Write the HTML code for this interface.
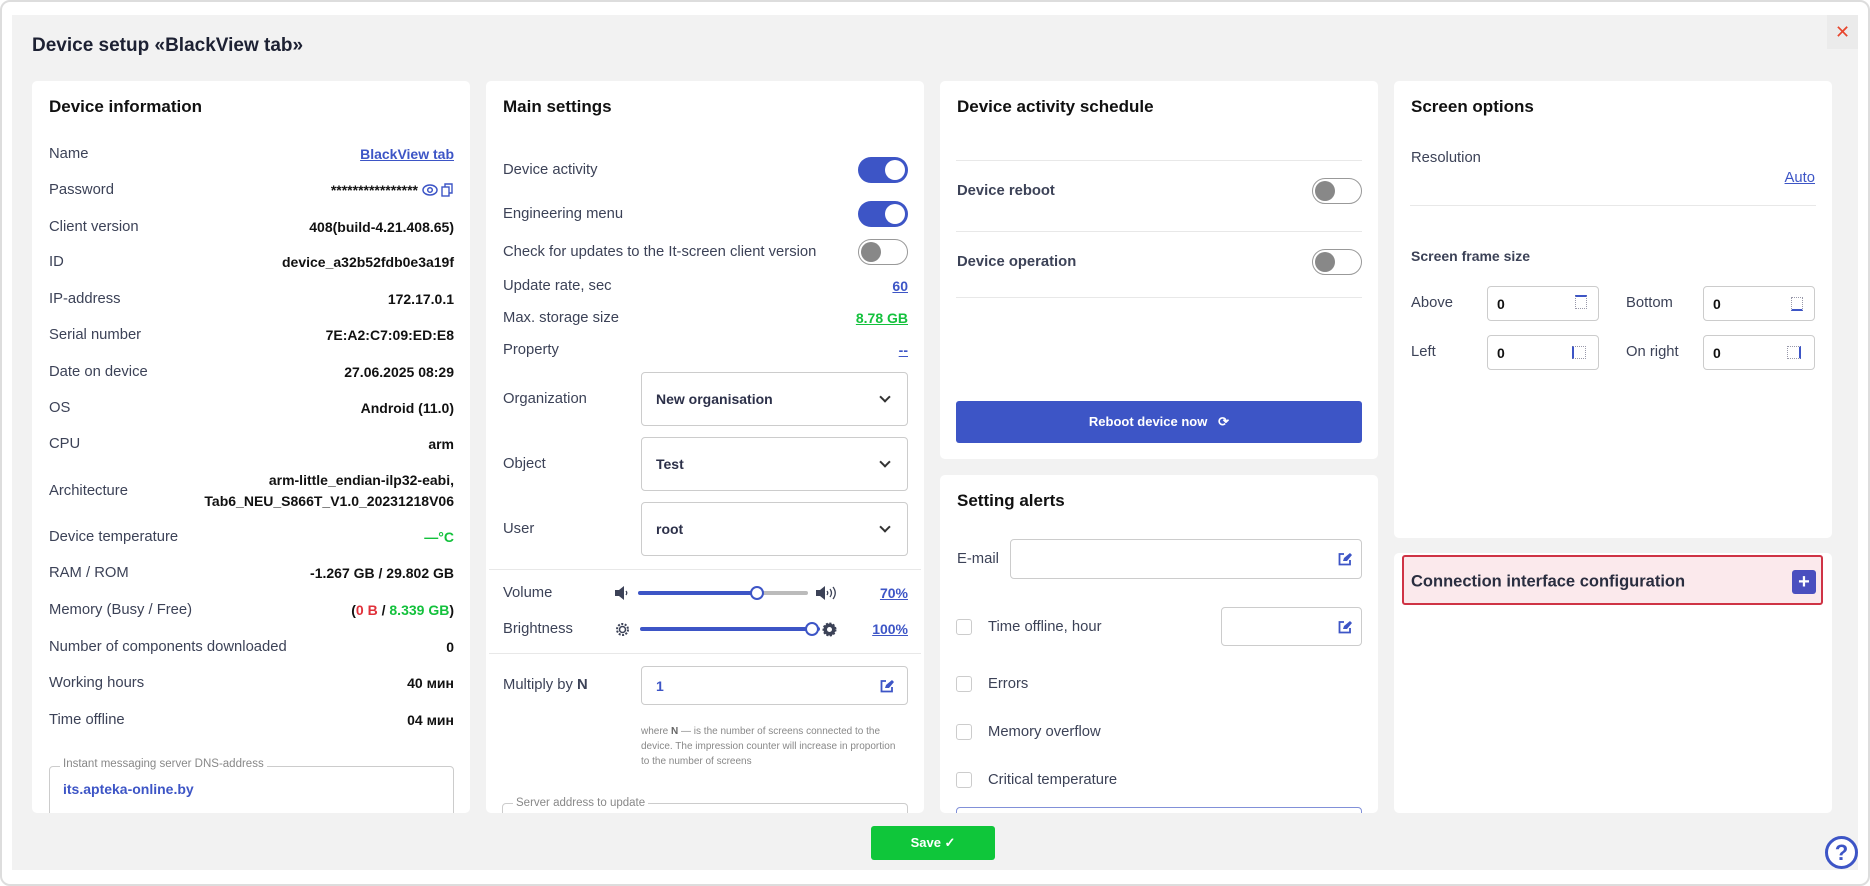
<!DOCTYPE html>
<html><head><meta charset="utf-8"><style>
*{box-sizing:border-box;margin:0;padding:0}
body{width:1870px;height:886px;background:#fff;font-family:"Liberation Sans",sans-serif;color:#3c4257;position:relative;overflow:hidden}
.a{position:absolute}
.outer{left:0;top:0;width:1870px;height:886px;border:2px solid #ddd;border-radius:10px}
.panel{left:12px;top:15px;width:1846px;height:855px;background:#f2f2f2}
.card{background:#fff;border-radius:5px;position:absolute;overflow:hidden}
h2{position:absolute;font-size:17px;font-weight:bold;color:#111}
.l{position:absolute;font-size:14.8px;color:#3c4257;transform:translateY(-50%);white-space:nowrap}
.v{position:absolute;font-size:14px;font-weight:bold;color:#111;transform:translateY(-50%);white-space:nowrap;text-align:right}
.lk{color:#3d55c6;text-decoration:underline}
.tg{position:absolute;width:50px;height:26px;border-radius:13px}
.tg.on{background:#3d55c6}
.tg.on::after{content:"";position:absolute;right:3px;top:3px;width:20px;height:20px;border-radius:50%;background:#fff}
.tg.off{border:1.5px solid #999;background:#fff}
.tg.off::after{content:"";position:absolute;left:2px;top:2px;width:20px;height:20px;border-radius:50%;background:#888}
.sel{position:absolute;border:1px solid #ccc;border-radius:4px;background:#fff}
.sel b{position:absolute;left:14px;top:50%;transform:translateY(-50%);font-size:14px;color:#2c3049}
.chev{position:absolute;right:18px;top:50%;width:8px;height:8px;border-right:2px solid #333;border-bottom:2px solid #333;transform:translateY(-75%) rotate(45deg)}
.line{position:absolute;height:1px;background:#e8e8e8}
.cb{position:absolute;width:16px;height:16px;border:1.5px solid #ccc;border-radius:3px}
.ed{position:absolute;width:14px;height:14px}
</style></head><body>
<div class="a outer"></div>
<div class="a panel"></div>
<div class="a" style="left:1827px;top:15px;width:31px;height:34px;background:#ebebeb;color:#e8452c;font-size:18px;text-align:center;line-height:34px">✕</div>
<div class="a" style="left:32px;top:35px;font-size:19px;font-weight:bold;color:#1d2133">Device setup «BlackView tab»</div>

<!-- card 1 -->
<div class="card" style="left:32px;top:81px;width:438px;height:732px">
<h2 style="left:17px;top:16px">Device information</h2>
</div>
<div class="a" style="left:0;top:0;width:1870px;height:886px">
<div class="l" style="left:49px;top:154px">Name</div><div class="v lk" style="right:1416px;top:154px">BlackView tab</div>
<div class="l" style="left:49px;top:190px">Password</div><div class="v" style="right:1452px;top:190px">****************</div>
<svg class="a" style="left:422px;top:183px" width="16" height="14" viewBox="0 0 16 14"><ellipse cx="8" cy="7" rx="7" ry="5" fill="none" stroke="#3d55c6" stroke-width="1.5"/><circle cx="8" cy="7" r="2.3" fill="none" stroke="#3d55c6" stroke-width="1.5"/></svg>
<svg class="a" style="left:441px;top:183px" width="12" height="14" viewBox="0 0 12 14"><rect x="1" y="4" width="7" height="9" fill="none" stroke="#3d55c6" stroke-width="1.4"/><path d="M4 4V1h7v9H8" fill="none" stroke="#3d55c6" stroke-width="1.4"/></svg>
<div class="l" style="left:49px;top:227px">Client version</div><div class="v" style="right:1416px;top:227px">408(build-4.21.408.65)</div>
<div class="l" style="left:49px;top:262px">ID</div><div class="v" style="right:1416px;top:262px">device_a32b52fdb0e3a19f</div>
<div class="l" style="left:49px;top:299px">IP-address</div><div class="v" style="right:1416px;top:299px">172.17.0.1</div>
<div class="l" style="left:49px;top:335px">Serial number</div><div class="v" style="right:1416px;top:335px">7E:A2:C7:09:ED:E8</div>
<div class="l" style="left:49px;top:372px">Date on device</div><div class="v" style="right:1416px;top:372px">27.06.2025 08:29</div>
<div class="l" style="left:49px;top:408px">OS</div><div class="v" style="right:1416px;top:408px">Android (11.0)</div>
<div class="l" style="left:49px;top:444px">CPU</div><div class="v" style="right:1416px;top:444px">arm</div>
<div class="l" style="left:49px;top:491px">Architecture</div><div class="v" style="right:1416px;top:491px;line-height:21px">arm-little_endian-ilp32-eabi,<br>Tab6_NEU_S866T_V1.0_20231218V06</div>
<div class="l" style="left:49px;top:537px">Device temperature</div><div class="v" style="right:1416px;top:537px;color:#13c13c">—°C</div>
<div class="l" style="left:49px;top:573px">RAM / ROM</div><div class="v" style="right:1416px;top:573px">-1.267 GB / 29.802 GB</div>
<div class="l" style="left:49px;top:610px">Memory (Busy / Free)</div><div class="v" style="right:1416px;top:610px">(<span style="color:#e0303a">0 B</span> / <span style="color:#13c13c">8.339 GB</span>)</div>
<div class="l" style="left:49px;top:647px">Number of components downloaded</div><div class="v" style="right:1416px;top:647px">0</div>
<div class="l" style="left:49px;top:683px">Working hours</div><div class="v" style="right:1416px;top:683px">40 мин</div>
<div class="l" style="left:49px;top:720px">Time offline</div><div class="v" style="right:1416px;top:720px">04 мин</div>
</div>
<div class="a" style="left:49px;top:766px;width:405px;height:60px;border:1px solid #ccc;border-radius:4px"></div>
<div class="a" style="left:60px;top:758px;background:#fff;padding:0 3px;font-size:11.5px;color:#888">Instant messaging server DNS-address</div>
<div class="a" style="left:63px;top:781px;font-size:14px;font-weight:bold;color:#3d55c6">its.apteka-online.by</div>

<!-- card 2 -->
<div class="card" style="left:486px;top:81px;width:438px;height:732px"><h2 style="left:17px;top:16px">Main settings</h2></div>
<div class="l" style="left:503px;top:170px">Device activity</div><div class="tg on" style="left:858px;top:157px"></div>
<div class="l" style="left:503px;top:214px">Engineering menu</div><div class="tg on" style="left:858px;top:201px"></div>
<div class="l" style="left:503px;top:252px">Check for updates to the It-screen client version</div><div class="tg off" style="left:858px;top:239px"></div>
<div class="l" style="left:503px;top:286px">Update rate, sec</div><div class="v lk" style="right:962px;top:286px">60</div>
<div class="l" style="left:503px;top:318px">Max. storage size</div><div class="v" style="right:962px;top:318px;color:#13c13c;text-decoration:underline">8.78 GB</div>
<div class="l" style="left:503px;top:350px">Property</div><div class="v lk" style="right:962px;top:350px">--</div>
<div class="l" style="left:503px;top:399px">Organization</div><div class="sel" style="left:641px;top:372px;width:267px;height:54px"><b>New organisation</b><i class="chev"></i></div>
<div class="l" style="left:503px;top:464px">Object</div><div class="sel" style="left:641px;top:437px;width:267px;height:54px"><b>Test</b><i class="chev"></i></div>
<div class="l" style="left:503px;top:529px">User</div><div class="sel" style="left:641px;top:502px;width:267px;height:54px"><b>root</b><i class="chev"></i></div>
<div class="line" style="left:489px;top:569px;width:432px"></div>
<div class="l" style="left:503px;top:593px">Volume</div>
<svg class="a" style="left:614px;top:585px" width="16" height="16" viewBox="0 0 16 16"><path d="M1 5h4l5-4v14l-5-4H1z" fill="#3c4257"/><path d="M12 6q1.5 2 0 4" stroke="#3c4257" fill="none" stroke-width="1.3"/></svg>
<div class="a" style="left:638px;top:591px;width:120px;height:4px;background:#3d55c6;border-radius:2px"></div>
<div class="a" style="left:758px;top:591px;width:50px;height:4px;background:#bbb;border-radius:2px"></div>
<div class="a" style="left:750px;top:586px;width:14px;height:14px;border:2.5px solid #3d55c6;border-radius:50%;background:#fff"></div>
<svg class="a" style="left:815px;top:585px" width="22" height="16" viewBox="0 0 22 16"><path d="M1 5h4l5-4v14l-5-4H1z" fill="#3c4257"/><path d="M12 6q1.5 2 0 4M15 4q3 4 0 8M18 2q4.5 6 0 12" stroke="#3c4257" fill="none" stroke-width="1.3"/></svg>
<div class="v lk" style="right:962px;top:593px">70%</div>
<div class="l" style="left:503px;top:629px">Brightness</div>
<svg class="a" style="left:614px;top:621px" width="17" height="17" viewBox="0 0 17 17"><circle cx="8.5" cy="8.5" r="5.5" fill="none" stroke="#3c4257" stroke-width="2" stroke-dasharray="2 1.5"/><circle cx="8.5" cy="8.5" r="3" fill="none" stroke="#3c4257" stroke-width="1.5"/></svg>
<div class="a" style="left:640px;top:627px;width:180px;height:4px;background:#3d55c6;border-radius:2px"></div>
<div class="a" style="left:805px;top:622px;width:14px;height:14px;border:2.5px solid #3d55c6;border-radius:50%;background:#fff"></div>
<svg class="a" style="left:821px;top:621px" width="17" height="17" viewBox="0 0 17 17"><circle cx="8.5" cy="8.5" r="6" fill="#3c4257" stroke="#3c4257" stroke-width="2" stroke-dasharray="2 1.5"/><circle cx="8.5" cy="8.5" r="2.5" fill="#fff"/></svg>
<div class="v lk" style="right:962px;top:629px">100%</div>
<div class="line" style="left:489px;top:653px;width:432px"></div>
<div class="l" style="left:503px;top:685px">Multiply by <b>N</b></div>
<div class="sel" style="left:641px;top:666px;width:267px;height:39px"><b style="color:#3d55c6">1</b></div>
<svg class="ed" style="left:880px;top:679px" viewBox="0 0 14 14"><path d="M6 2H1.5v10.5H12V8" fill="none" stroke="#3d55c6" stroke-width="1.8"/><path d="M5 9l1-3 6-5 2 2-5 6z" fill="#3d55c6"/></svg>
<div class="a" style="left:641px;top:724px;width:262px;font-size:10px;line-height:15px;color:#888">where <b style="color:#666">N</b> — is the number of screens connected to the device. The impression counter will increase in proportion to the number of screens</div>
<div class="a" style="left:502px;top:803px;width:406px;height:30px;border:1px solid #ccc;border-radius:4px"></div>
<div class="a" style="left:513px;top:797px;background:#fff;padding:0 3px;font-size:11.5px;color:#888">Server address to update</div>

<!-- card 3 -->
<div class="card" style="left:940px;top:81px;width:438px;height:378px"><h2 style="left:17px;top:16px">Device activity schedule</h2></div>
<div class="line" style="left:956px;top:160px;width:406px"></div>
<div class="l" style="left:957px;top:191px;font-weight:bold">Device reboot</div><div class="tg off" style="left:1312px;top:178px"></div>
<div class="line" style="left:956px;top:231px;width:406px"></div>
<div class="l" style="left:957px;top:262px;font-weight:bold">Device operation</div><div class="tg off" style="left:1312px;top:249px"></div>
<div class="line" style="left:956px;top:297px;width:406px"></div>
<div class="a" style="left:956px;top:401px;width:406px;height:42px;background:#3d55c6;border-radius:3px;color:#fff;font-size:13px;font-weight:bold;text-align:center;line-height:42px">Reboot device now &nbsp; ⟳</div>

<div class="card" style="left:940px;top:475px;width:438px;height:338px"><h2 style="left:17px;top:16px">Setting alerts</h2></div>
<div class="l" style="left:957px;top:559px">E-mail</div>
<div class="sel" style="left:1010px;top:539px;width:352px;height:40px"></div>
<svg class="ed" style="left:1338px;top:552px" viewBox="0 0 14 14"><path d="M6 2H1.5v10.5H12V8" fill="none" stroke="#3d55c6" stroke-width="1.8"/><path d="M5 9l1-3 6-5 2 2-5 6z" fill="#3d55c6"/></svg>
<div class="cb" style="left:956px;top:619px"></div><div class="l" style="left:988px;top:627px">Time offline, hour</div>
<div class="sel" style="left:1221px;top:607px;width:141px;height:39px"></div>
<svg class="ed" style="left:1338px;top:620px" viewBox="0 0 14 14"><path d="M6 2H1.5v10.5H12V8" fill="none" stroke="#3d55c6" stroke-width="1.8"/><path d="M5 9l1-3 6-5 2 2-5 6z" fill="#3d55c6"/></svg>
<div class="cb" style="left:956px;top:676px"></div><div class="l" style="left:988px;top:684px">Errors</div>
<div class="cb" style="left:956px;top:724px"></div><div class="l" style="left:988px;top:732px">Memory overflow</div>
<div class="cb" style="left:956px;top:772px"></div><div class="l" style="left:988px;top:780px">Critical temperature</div>
<div class="a" style="left:956px;top:807px;width:406px;height:20px;border:1px solid #8190d8;border-radius:4px"></div>

<!-- card 4 -->
<div class="card" style="left:1394px;top:81px;width:438px;height:457px"><h2 style="left:17px;top:16px">Screen options</h2></div>
<div class="l" style="left:1411px;top:158px">Resolution</div>
<div class="v lk" style="right:55px;top:178px;font-weight:normal;font-size:14.8px">Auto</div>
<div class="line" style="left:1410px;top:205px;width:406px"></div>
<div class="l" style="left:1411px;top:256px;font-weight:bold;font-size:14px">Screen frame size</div>
<div class="l" style="left:1411px;top:303px">Above</div>
<div class="sel" style="left:1487px;top:286px;width:112px;height:35px"><b style="left:9px;color:#111">0</b></div>
<div class="l" style="left:1626px;top:303px">Bottom</div>
<div class="sel" style="left:1703px;top:286px;width:112px;height:35px"><b style="left:9px;color:#111">0</b></div>
<div class="l" style="left:1411px;top:352px">Left</div>
<div class="sel" style="left:1487px;top:335px;width:112px;height:35px"><b style="left:9px;color:#111">0</b></div>
<div class="l" style="left:1626px;top:352px">On right</div>
<div class="sel" style="left:1703px;top:335px;width:112px;height:35px"><b style="left:9px;color:#111">0</b></div>
<div class="a" style="left:1575px;top:295px;width:12px;height:14px;border:1px dotted #99a;border-top:2px solid #3d55c6"></div>
<div class="a" style="left:1791px;top:297px;width:12px;height:14px;border:1px dotted #99a;border-bottom:2px solid #3d55c6"></div>
<div class="a" style="left:1572px;top:346px;width:14px;height:13px;border:1px dotted #99a;border-left:2px solid #3d55c6"></div>
<div class="a" style="left:1787px;top:346px;width:14px;height:13px;border:1px dotted #99a;border-right:2px solid #3d55c6"></div>

<div class="card" style="left:1394px;top:553px;width:438px;height:260px"></div>
<div class="a" style="left:1402px;top:555px;width:421px;height:50px;background:#fbe9ec;border:2px solid #cf3345;border-radius:3px"></div>
<div class="a" style="left:1411px;top:582px;transform:translateY(-50%);font-size:16.5px;font-weight:bold;color:#2a2e40">Connection interface configuration</div>
<div class="a" style="left:1792px;top:570px;width:24px;height:24px;background:#4a4fbf;border-radius:3px;color:#fff;text-align:center;line-height:24px;font-size:20px;font-weight:bold">+</div>

<!-- bottom mask -->
<div class="a" style="left:12px;top:813px;width:1846px;height:57px;background:#f2f2f2"></div>

<div class="a" style="left:871px;top:826px;width:124px;height:34px;background:#0fc63a;border-radius:3px;color:#fff;font-size:13px;font-weight:bold;text-align:center;line-height:34px">Save ✓</div>
<div class="a" style="left:1825px;top:836px;width:33px;height:33px;border:3px solid #3d55c6;border-radius:50%;color:#3d55c6;text-align:center;line-height:27px;font-size:22px;font-weight:bold;background:#fff">?</div>
</body></html>
